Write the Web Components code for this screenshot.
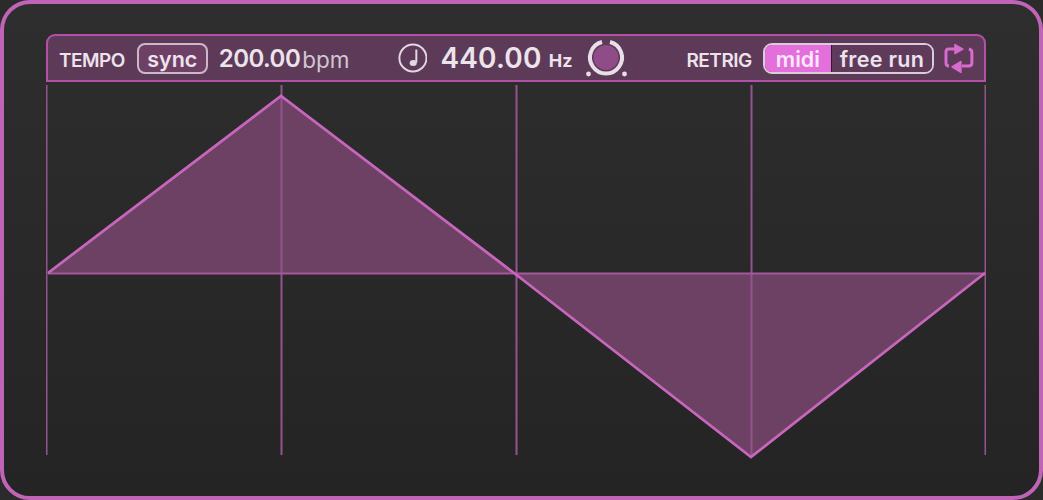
<!DOCTYPE html>
<html>
<head>
<meta charset="utf-8">
<style>
    html, body { margin: 0; padding: 0; background: #2b2b2b; }
</style>
</head>
<body>
<lfo-panel>
    <lfo-bar>
        <span slot="tempo">TEMPO</span>
        <span slot="sync">sync</span>
        <span slot="rate">200.00</span>
        <span slot="unit">bpm</span>
        <span slot="freq">440.00</span>
        <span slot="hz">Hz</span>
        <span slot="retrig">RETRIG</span>
    </lfo-bar>
    <lfo-scope></lfo-scope>
</lfo-panel>

<script>
'use strict';

(function () {
    class LfoPanel extends HTMLElement {
        constructor() {
            super();
            const shadow = this.attachShadow({ mode: 'open' });
            shadow.innerHTML = `
                <style>
                    :host {
                        display: flex;
                        flex-direction: column;
                        box-sizing: border-box;
                        width: 1043px;
                        height: 500px;
                        padding: 30px 53px 0 42px;
                        border: 4px solid #c064b8;
                        border-radius: 30px;
                        background: linear-gradient(#2e2e2e, #242424);
                        font-family: "Inter", "Liberation Sans", sans-serif;
                    }
                </style>
                <slot></slot>
            `;
        }
    }

    class LfoBar extends HTMLElement {
        constructor() {
            super();
            const shadow = this.attachShadow({ mode: 'open' });
            shadow.innerHTML = `
                <style>
                    :host {
                        display: flex;
                        align-items: center;
                        box-sizing: border-box;
                        width: 940px;
                        height: 48px;
                        padding: 0 10px 0 11px;
                        background: #5d3a58;
                        border: 2px solid #b450a8;
                        border-radius: 9px 9px 0 0;
                        color: #ece3eb;
                    }
                    .label { font-size: 19px; font-weight: 600; letter-spacing: -0.5px; padding-top: 4px; }
                    .sync {
                        box-sizing: border-box;
                        width: 71px;
                        height: 31px;
                        margin-left: 12px;
                        padding-top: 2px;
                        display: flex;
                        align-items: center;
                        justify-content: center;
                        border: 2px solid #cdb8ca;
                        border-radius: 8px;
                        background: #6f4065;
                        font-size: 21.5px;
                        font-weight: 600;
                    }
                    .num { font-size: 24px; font-weight: 600; }
                    .rate { margin-left: 11px; letter-spacing: -0.5px; }
                    .unit { font-size: 22.5px; font-weight: 400; margin-left: 2px; padding-top: 2px; color: #d3c6d1; }
                    .note { margin-left: 48px; display: block; }
                    .freq { margin-left: 13px; font-size: 28px; font-weight: 600; letter-spacing: 0.2px; }
                    .hz { margin-left: 7px; font-size: 18px; font-weight: 700; padding-top: 4px; }
                    .knob { margin-left: 14px; display: block; overflow: visible; }
                    .retrig { margin-left: 60px; }
                    .toggle {
                        box-sizing: border-box;
                        display: flex;
                        width: 172px;
                        height: 31px;
                        margin-left: 11px;
                        border: 2px solid #d9cdd7;
                        border-radius: 9px;
                        overflow: hidden;
                        font-size: 21.5px;
                        font-weight: 600;
                    }
                    .toggle div { display: flex; align-items: center; justify-content: center; padding-top: 2px; }
                    .midi { width: 66px; background: #e46fdc; color: #fbe9f9; }
                    .free { flex: 1; background: #5f3a5a; border-left: 1px solid #2e1f2c; letter-spacing: 0.3px; }
                    .loop { margin-left: 10px; display: block; }
                </style>
                <span class="label"><slot name="tempo"></slot></span>
                <div class="sync"><slot name="sync"></slot></div>
                <span class="num rate"><slot name="rate"></slot></span>
                <span class="unit"><slot name="unit"></slot></span>
                <svg class="note" width="30" height="30" viewBox="0 0 30 30" fill="none">
                    <circle cx="15" cy="15" r="13.6" stroke="#e3d8e2" stroke-width="2"/>
                    <path d="M18.4 6.5V19.5" stroke="#e3d8e2" stroke-width="2"/>
                    <ellipse cx="15.3" cy="20" rx="3.6" ry="3" fill="#e3d8e2"/>
                </svg>
                <span class="num freq"><slot name="freq"></slot></span>
                <span class="hz"><slot name="hz"></slot></span>
                <svg class="knob" width="40" height="40" viewBox="0 0 40 40" fill="none">
                    <circle cx="20" cy="19.5" r="12.5" fill="#8f4c88"/>
                    <path d="M16 4A16 16 0 1 0 24 4" stroke="#e9dfe8" stroke-width="4"/>
                    <circle cx="2.5" cy="36" r="2.4" fill="#e9dfe8"/>
                    <circle cx="38.5" cy="36" r="2.4" fill="#e9dfe8"/>
                </svg>
                <span class="label retrig"><slot name="retrig"></slot></span>
                <div class="toggle">
                    <div class="midi">midi</div>
                    <div class="free">free run</div>
                </div>
                <svg class="loop" width="30" height="31" viewBox="0 0 30 31" fill="none" stroke="#d66ccd" stroke-width="3">
                    <path d="M12 6H5Q2 6 2 9V20Q2 23 5 23"/>
                    <path d="M18 23H25Q28 23 28 20V9Q28 7 25 6"/>
                    <path d="M11 1.5L19 6L11 10.5Z" fill="#d66ccd" stroke-width="1.5" stroke-linejoin="round"/>
                    <path d="M17 18.5L8 24L17 29.5Z" fill="#d66ccd" stroke-width="1.5" stroke-linejoin="round"/>
                </svg>
            `;
        }
    }

    class LfoScope extends HTMLElement {
        constructor() {
            super();
            const shadow = this.attachShadow({ mode: 'open' });

            // x of the grid lines, in the svg's own coordinates
            const grid = [0, 235, 470, 705, 939];

            shadow.innerHTML = `
                <style>
                    :host { display: block; width: 940px; height: 382px; }
                    svg { display: block; filter: blur(0.35px); }
                </style>
                <svg width="940" height="382" viewBox="0 0 940 382" fill="none">
                    <path d="M2 191L235 14L468 191Z M468 191L705 375L939 191Z" fill="#6d4164"/>
                    ${grid.map(x => `
                        <path d="M${x + 0.5} 3V373" stroke="#96528f" stroke-width="2"/>
                    `).join('')}
                    <path d="M2 191.5H939" stroke="#a6589f" stroke-width="2"/>
                    <path d="M2 191L235 14L468 191L705 375L939 191" stroke="#c866be" stroke-width="2.8"/>
                </svg>
            `;
        }
    }

    customElements.define('lfo-panel', LfoPanel);
    customElements.define('lfo-bar', LfoBar);
    customElements.define('lfo-scope', LfoScope);
})();
</script>
</body>
</html>
